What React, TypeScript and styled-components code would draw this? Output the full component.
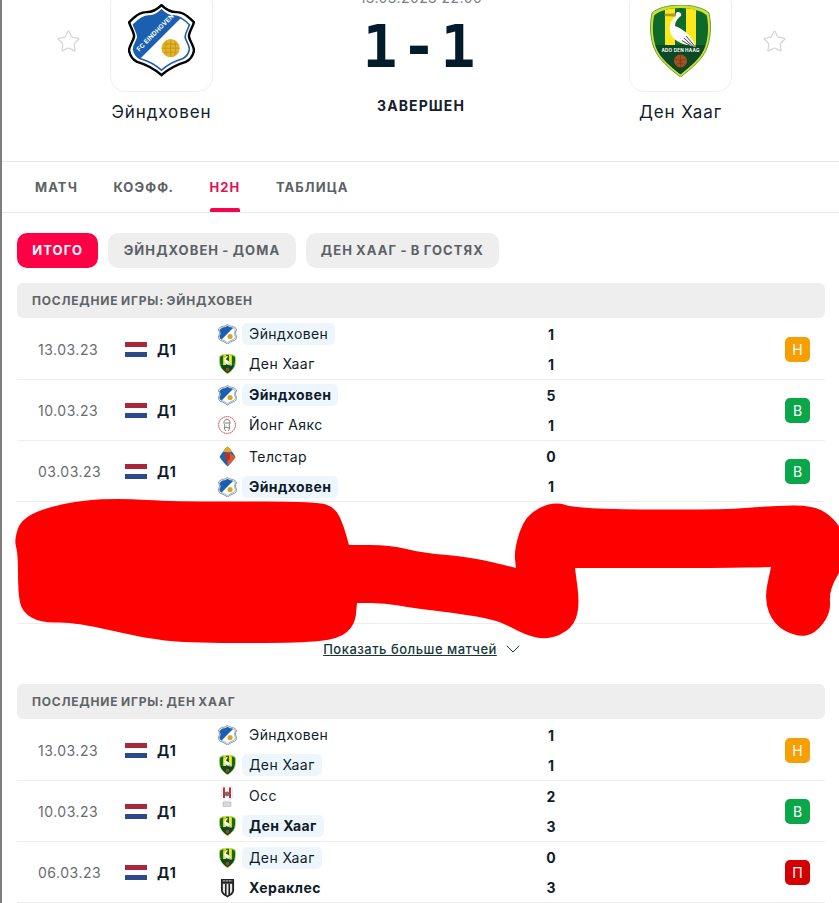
import { ReactNode } from "react";
import styled, { createGlobalStyle } from "styled-components";
import { ChevronDown, Star } from "lucide-react";

const GlobalStyle = createGlobalStyle`
  html, body {
    margin: 0;
    padding: 0;
    background: #fff;
    overflow: hidden;
    height: 903px;
  }
  body {
    font-family: Inter, "Noto Sans", "Liberation Sans", sans-serif;
    color: #101c2a;
  }
`;

const Page = styled.div`
  position: relative;
  width: 839px;
  height: 903px;
  box-sizing: border-box;
  border-left: 2px solid #7d7d7d;
  overflow: hidden;
`;

const Header = styled.header`
  display: flex;
  align-items: flex-start;
  height: 173px;
  margin-top: -11px;
  padding: 0 43px 0 44px;
  box-sizing: border-box;
  border-bottom: 1px solid #e8e8e8;
`;

const StarBox = styled.div`
  width: 44px;
  height: 105px;
  display: flex;
  align-items: center;
  justify-content: center;
  color: #d6d6d6;
`;

const Team = styled.div`
  width: 103px;
  margin: 0 20px;
  display: flex;
  flex-direction: column;
  align-items: center;
`;

const LogoCard = styled.div`
  width: 103px;
  height: 103px;
  box-sizing: border-box;
  border: 1px solid #eeeeee;
  border-radius: 15px;
  display: flex;
  align-items: center;
  justify-content: center;
`;

const TeamName = styled.div`
  margin-top: 9px;
  font-size: 17px;
  line-height: 22px;
  letter-spacing: 0.9px;
  white-space: nowrap;
  color: #12202e;
`;

const Center = styled.div`
  flex: 1;
  display: flex;
  flex-direction: column;
  align-items: center;
`;

const DateTime = styled.div`
  font-size: 14px;
  line-height: 18px;
  letter-spacing: 0.4px;
  color: #7b7f83;
`;

const Score = styled.div`
  margin-top: 5px;
  font-family: "DejaVu Sans Mono", "Liberation Mono", monospace;
  font-weight: 700;
  font-size: 58px;
  line-height: 70px;
  letter-spacing: 4px;
  color: #021c2b;
`;

const Status = styled.div`
  margin-top: 15px;
  font-size: 14px;
  line-height: 18px;
  font-weight: 700;
  letter-spacing: 1.1px;
  color: #16202a;
`;

const Tabs = styled.nav`
  display: flex;
  gap: 35.5px;
  height: 51px;
  padding-left: 33px;
  box-sizing: border-box;
  border-bottom: 1px solid #e8e8e8;
`;

const Tab = styled.div<{ $active?: boolean }>`
  position: relative;
  font-size: 13px;
  line-height: 50px;
  font-weight: 700;
  letter-spacing: 1.1px;
  color: ${(p) => (p.$active ? "#e6104e" : "#5c6166")};
  ${(p) =>
    p.$active &&
    `&::after {
      content: "";
      position: absolute;
      left: 0;
      right: 0;
      bottom: 0;
      height: 4px;
      border-radius: 2px 2px 0 0;
      background: #f0064f;
    }`}
`;

const Filters = styled.div`
  display: flex;
  gap: 10px;
  padding: 20px 0 15px 15px;
`;

const Pill = styled.div<{ $active?: boolean }>`
  height: 35px;
  padding: 0 15.25px;
  border-radius: 10px;
  font-size: 13px;
  line-height: 35px;
  font-weight: 700;
  letter-spacing: 1.1px;
  word-spacing: -1px;
  background: ${(p) => (p.$active ? "#ff0046" : "#eeeeee")};
  color: ${(p) => (p.$active ? "#fff" : "#5c6166")};
`;

const Section = styled.section`
  margin: 0 14px 0 15px;
`;

const SectionTitle = styled.div`
  height: 35.3px;
  padding-left: 15px;
  border-radius: 6px;
  background: #eeeeee;
  font-size: 12px;
  line-height: 35px;
  font-weight: 700;
  letter-spacing: 0.8px;
  word-spacing: -1px;
  color: #5f6468;
`;

const Row = styled.div`
  display: flex;
  align-items: center;
  height: 61.3px;
  padding-top: 1.5px;
  box-sizing: border-box;
  border-bottom: 1px solid #eeeeee;
`;

const MatchDate = styled.div`
  width: 108px;
  padding-left: 21px;
  box-sizing: border-box;
  font-size: 14px;
  letter-spacing: 0.5px;
  color: #686c70;
`;

const Flag = styled.div`
  width: 22px;
  height: 15px;
  background: linear-gradient(#a8283a 0 33%, #fff 33% 66%, #2a4a8c 66% 100%);
`;

const League = styled.div`
  width: 70px;
  padding-left: 10px;
  box-sizing: border-box;
  font-size: 14px;
  font-weight: 700;
  letter-spacing: 0.5px;
  color: #101c2a;
`;

const Lines = styled.div`
  flex: 1;
  display: flex;
  flex-direction: column;
  gap: 8px;
`;

const Line = styled.div`
  display: flex;
  align-items: center;
  height: 22px;
`;

const IconSlot = styled.div`
  width: 20px;
  margin-right: 5px;
  display: flex;
  justify-content: center;
`;

const Name = styled.div`
  width: 304px;
  display: flex;
  align-items: center;
`;

const NameChip = styled.span<{ $mine?: boolean; $won?: boolean }>`
  height: 22px;
  padding: 0 7px;
  border-radius: 5px;
  font-size: 14px;
  line-height: 22px;
  letter-spacing: 0.4px;
  white-space: nowrap;
  font-weight: ${(p) => (p.$won ? 700 : 400)};
  background: ${(p) => (p.$mine ? "#eef6fd" : "transparent")};
  color: #101c2a;
`;

const Goals = styled.div`
  width: 10px;
  text-align: center;
  font-size: 14px;
  font-weight: 700;
  color: #101c2a;
`;

const Badge = styled.div<{ $tone: "draw" | "win" | "loss" }>`
  width: 25px;
  height: 25px;
  margin-right: 15px;
  border-radius: 5px;
  font-size: 14px;
  line-height: 25px;
  text-align: center;
  color: #fff;
  background: ${(p) =>
    p.$tone === "draw" ? "#f59f00" : p.$tone === "win" ? "#0aa64a" : "#d40000"};
`;

const CensoredRows = styled.div`
  height: 122px;
  box-sizing: border-box;
  border-bottom: 1px solid #eeeeee;
`;

const MoreWrap = styled.div`
  height: 59.8px;
  padding: 13px 0 0 6px;
  box-sizing: border-box;
  display: flex;
  justify-content: center;
  align-items: center;
  align-content: flex-start;
  flex-wrap: wrap;
  gap: 4px;
`;

const MoreLink = styled.a`
  font-size: 13px;
  line-height: 20px;
  font-weight: 500;
  letter-spacing: 0.5px;
  text-decoration: underline;
  color: #15383a;
`;

const Scribble = styled.svg`
  position: absolute;
  left: -2px;
  top: 0;
  pointer-events: none;
`;

// Team crests
function EindhovenCrest({ size, small }: { size: number; small?: boolean }) {
  const shield =
    "M33 1C37 5 43 8 48 8C52 8 56 9 65 18C63 24 60 28 60 32C61 37 65 41 65 46C64 51 61 55 57 57C50 59 40 64 33 70C26 64 16 59 9 57C5 55 2 51 1 46C1 41 5 37 6 32C6 28 3 24 1 18C10 9 14 8 18 8C23 8 29 5 33 1Z";
  const inset = "translate(4.6 5) scale(0.86)";
  const id = small ? "fc-s" : "fc-l";
  return (
    <svg width={size} height={(size * 71) / 66} viewBox="0 0 66 71">
      <defs>
        <clipPath id={id}>
          <path d={shield} transform={inset} />
        </clipPath>
      </defs>
      <path d={shield} fill="#fff" stroke={small ? "#5b6673" : "#000"} strokeWidth="2.4" />
      <g clipPath={`url(#${id})`}>
        <path d="M0 0H66L9 57H0Z" fill="#1a5fb0" />
      </g>
      <path d={shield} transform={inset} fill="none" stroke="#1a5fb0" strokeWidth="1.8" />
      {!small && (
        <text
          x="11"
          y="47"
          transform="rotate(-45 11 47)"
          fontSize="6.2"
          fontWeight="700"
          fill="#fff"
          letterSpacing="0.2"
        >
          FC EINDHOVEN
        </text>
      )}
      <circle cx="42" cy="43.5" r="9" fill="#e6b429" />
      <path
        d="M33.5 43.5H50.5M35 39.5H49M35 47.5H49M42 35V52M38 36Q36 43 38 51M46 36Q48 43 46 51"
        stroke="#a97f12"
        strokeWidth="0.5"
        fill="none"
      />
    </svg>
  );
}

function DenHaagCrest({ size, small }: { size: number; small?: boolean }) {
  const shield =
    "M30.5 0C42 0 54 3 59 8C62 22 61 40 52 52C45 61 37 67 30.5 72C24 67 16 61 9 52C0 40 -1 22 2 8C7 3 19 0 30.5 0Z";
  const id = small ? "ado-s" : "ado-l";
  return (
    <svg width={size} height={(size * 72) / 61} viewBox="0 0 61 72">
      <defs>
        <clipPath id={id}>
          <path d={shield} transform="translate(2.4 2.9) scale(0.92)" />
        </clipPath>
      </defs>
      <path d={shield} fill="#d3df2e" stroke="#3f8f2d" strokeWidth="0.8" />
      <g clipPath={`url(#${id})`}>
        <rect width="61" height="72" fill="#0c6a2b" />
        <rect x="15" y="0" width="10" height="40" fill="#fbe81a" />
        <rect x="36" y="0" width="10" height="40" fill="#fbe81a" />
        <rect y="40" width="61" height="32" fill="#0b4a24" />
      </g>
      <path
        d="M27 7C30 6.5 32 8.5 31 11C28 13 25 17 25 21C31 23 38 28 42 34L46 42L38 40C30 39 22 34 20 27C19 21 21 15 25 12L25 9.5Z"
        fill="#fff"
      />
      <path d="M14 9.2L25.5 8.8V11.2L14 10.6Z" fill="#c9a82a" stroke="#2b2b2b" strokeWidth="0.3" />
      <path d="M36 31L45 41.5M34 33L43 41.5M32 35.5L40 40.5" stroke="#2a2a2a" strokeWidth="0.9" />
      {!small && (
        <text
          x="30.5"
          y="47"
          textAnchor="middle"
          fontSize="4.6"
          fontWeight="700"
          fill="#fff"
          letterSpacing="0.2"
        >
          ADO DEN HAAG
        </text>
      )}
      <circle cx="30.5" cy="56" r="6.5" fill="#a5511d" />
      <path d="M24.5 54Q30 57 36.5 54M26 60Q30 56 35 60M30.5 50V62" stroke="#6f3410" strokeWidth="0.6" fill="none" />
    </svg>
  );
}

function AjaxCrest() {
  return (
    <svg width="18" height="18" viewBox="0 0 18 18">
      <circle cx="9" cy="9" r="8.4" fill="#fff" stroke="#c8102e" strokeWidth="0.8" strokeDasharray="1.6 0.5" />
      <path
        d="M9 3C6 4 5 7 7 9C6 11 6 13 8 15M9 3C12 4 13 7 11 9C12 11 12 13 10 15M7 7H12M6.5 11L11.5 12"
        stroke="#6d6d6d"
        strokeWidth="0.9"
        fill="none"
      />
    </svg>
  );
}

function TelstarCrest() {
  return (
    <svg width="17" height="21" viewBox="0 0 17 21">
      <path d="M8.5 0.5C11 2.5 15 8 16.5 11C14 15 11 18 8.5 20.5C6 18 3 15 0.5 11C2 8 6 2.5 8.5 0.5Z" fill="#1c66ad" />
      <path d="M8.5 5L16.5 11C14 15 11 18 8.5 20.5Z" fill="#e2572b" />
      <path d="M8.5 0.5C10 1.6 12 4 13.5 6H3.5C5 4 7 1.6 8.5 0.5Z" fill="#e7a62b" />
      <path d="M6 7H11V13L8.5 15L6 13Z" fill="#b9332b" />
    </svg>
  );
}

function OssCrest() {
  return (
    <svg width="14" height="21" viewBox="0 0 14 21">
      <path d="M2 1H12L13 11L7 16L1 11Z" fill="#fff" stroke="#cfcfcf" strokeWidth="0.5" />
      <path d="M3 1.5H5V12H3ZM9 1.5H11V12H9Z" fill="#cf2a36" />
      <circle cx="7" cy="8" r="2.4" fill="#7b6f70" />
      <rect x="3" y="16" width="8" height="4.5" fill="#d9d9d9" stroke="#a9a9a9" strokeWidth="0.5" />
    </svg>
  );
}

function HeraclesCrest() {
  return (
    <svg width="15" height="20" viewBox="0 0 16 21">
      <path d="M1 1H15V13C15 17 11 19 8 20.5C5 19 1 17 1 13Z" fill="#222" />
      <path d="M3 6H13V13C13 15.5 10.5 17.3 8 18.5C5.5 17.3 3 15.5 3 13Z" fill="#e8e8e8" />
      <path d="M5.3 6H7V18H5.3ZM9 6H10.7V18H9Z" fill="#222" />
      <path d="M3 2.8H13" stroke="#ddd" strokeWidth="1.4" strokeDasharray="1 0.6" />
    </svg>
  );
}

const eindhoven = <EindhovenCrest size={19} small />;
const denHaag = <DenHaagCrest size={17} small />;

interface Side {
  icon: ReactNode;
  name: string;
  goals: number;
  mine?: boolean;
  won?: boolean;
}

interface Match {
  date: string;
  home: Side;
  away: Side;
  result: "draw" | "win" | "loss";
}

const resultLetter = { draw: "Н", win: "В", loss: "П" };

const eindhovenMatches: Match[] = [
  {
    date: "13.03.23",
    home: { icon: eindhoven, name: "Эйндховен", goals: 1, mine: true },
    away: { icon: denHaag, name: "Ден Хааг", goals: 1 },
    result: "draw",
  },
  {
    date: "10.03.23",
    home: { icon: eindhoven, name: "Эйндховен", goals: 5, mine: true, won: true },
    away: { icon: <AjaxCrest />, name: "Йонг Аякс", goals: 1 },
    result: "win",
  },
  {
    date: "03.03.23",
    home: { icon: <TelstarCrest />, name: "Телстар", goals: 0 },
    away: { icon: eindhoven, name: "Эйндховен", goals: 1, mine: true, won: true },
    result: "win",
  },
];

const denHaagMatches: Match[] = [
  {
    date: "13.03.23",
    home: { icon: eindhoven, name: "Эйндховен", goals: 1 },
    away: { icon: denHaag, name: "Ден Хааг", goals: 1, mine: true },
    result: "draw",
  },
  {
    date: "10.03.23",
    home: { icon: <OssCrest />, name: "Осс", goals: 2 },
    away: { icon: denHaag, name: "Ден Хааг", goals: 3, mine: true, won: true },
    result: "win",
  },
  {
    date: "06.03.23",
    home: { icon: denHaag, name: "Ден Хааг", goals: 0, mine: true },
    away: { icon: <HeraclesCrest />, name: "Хераклес", goals: 3, won: true },
    result: "loss",
  },
];

function TeamLine({ side }: { side: Side }) {
  return (
    <Line>
      <IconSlot>{side.icon}</IconSlot>
      <Name>
        <NameChip $mine={side.mine} $won={side.won}>
          {side.name}
        </NameChip>
      </Name>
      <Goals>{side.goals}</Goals>
    </Line>
  );
}

function MatchRow({ match }: { match: Match }) {
  return (
    <Row>
      <MatchDate>{match.date}</MatchDate>
      <Flag />
      <League>Д1</League>
      <Lines>
        <TeamLine side={match.home} />
        <TeamLine side={match.away} />
      </Lines>
      <Badge $tone={match.result}>{resultLetter[match.result]}</Badge>
    </Row>
  );
}

// the red marker someone drew over the screenshot, doubled points stay sharp
const scribblePoints = [
  [14, 540], [22, 517], [62, 503], [112, 498], [182, 502], [316, 501], [336, 508], [344, 527],
  [349, 545], [349, 545], [390, 545], [423, 553], [471, 557], [516, 568], [516, 568], [514, 550],
  [525, 515], [554, 501], [577, 509], [722, 510], [770, 506], [815, 505], [837, 521], [845, 540],
  [845, 563], [829, 590], [831, 613], [815, 634], [797, 637], [774, 625], [764, 600], [771, 567],
  [771, 567], [722, 568], [575, 568], [575, 568], [580, 607], [572, 629], [548, 640], [525, 635],
  [498, 620], [455, 613], [412, 608], [385, 603], [357, 603], [357, 603], [355, 625], [339, 639],
  [300, 643], [193, 643], [148, 639], [75, 622], [41, 623], [22, 612], [18, 593], [18, 553],
];

// rounds the marker outline through the midpoints of its corners
const mid = (a: number[], b: number[]) => `${(a[0] + b[0]) / 2} ${(a[1] + b[1]) / 2}`;
const scribblePath =
  `M${mid(scribblePoints[0], scribblePoints[1])}` +
  scribblePoints
    .map((p, i) => {
      const next = scribblePoints[(i + 1) % scribblePoints.length];
      const after = scribblePoints[(i + 2) % scribblePoints.length];
      return `Q${next[0]} ${next[1]} ${mid(next, after)}`;
    })
    .join("") +
  "Z";

export default function App() {
  return (
    <Page>
      <GlobalStyle />
      <Header>
        <StarBox>
          <Star size={25} strokeWidth={1.2} />
        </StarBox>
        <Team>
          <LogoCard>
            <EindhovenCrest size={67} />
          </LogoCard>
          <TeamName>Эйндховен</TeamName>
        </Team>
        <Center>
          <DateTime>13.03.2023 22:00</DateTime>
          <Score>1-1</Score>
          <Status>ЗАВЕРШЕН</Status>
        </Center>
        <Team>
          <LogoCard>
            <DenHaagCrest size={61} />
          </LogoCard>
          <TeamName>Ден Хааг</TeamName>
        </Team>
        <StarBox>
          <Star size={25} strokeWidth={1.2} />
        </StarBox>
      </Header>
      <Tabs>
        <Tab>МАТЧ</Tab>
        <Tab>КОЭФФ.</Tab>
        <Tab $active>H2H</Tab>
        <Tab>ТАБЛИЦА</Tab>
      </Tabs>
      <Filters>
        <Pill $active>ИТОГО</Pill>
        <Pill>ЭЙНДХОВЕН - ДОМА</Pill>
        <Pill>ДЕН ХААГ - В ГОСТЯХ</Pill>
      </Filters>
      <Section>
        <SectionTitle>ПОСЛЕДНИЕ ИГРЫ: ЭЙНДХОВЕН</SectionTitle>
        {eindhovenMatches.map((m) => (
          <MatchRow key={m.date} match={m} />
        ))}
        <CensoredRows />
        <MoreWrap>
          <MoreLink>Показать больше матчей</MoreLink>
          <ChevronDown size={24} strokeWidth={1} color="#15383a" />
        </MoreWrap>
      </Section>
      <Section>
        <SectionTitle>ПОСЛЕДНИЕ ИГРЫ: ДЕН ХААГ</SectionTitle>
        {denHaagMatches.map((m) => (
          <MatchRow key={m.date} match={m} />
        ))}
      </Section>
      <Scribble width="841" height="903" viewBox="0 0 841 903">
        <path d={scribblePath} fill="#fe0000" />
      </Scribble>
    </Page>
  );
}
